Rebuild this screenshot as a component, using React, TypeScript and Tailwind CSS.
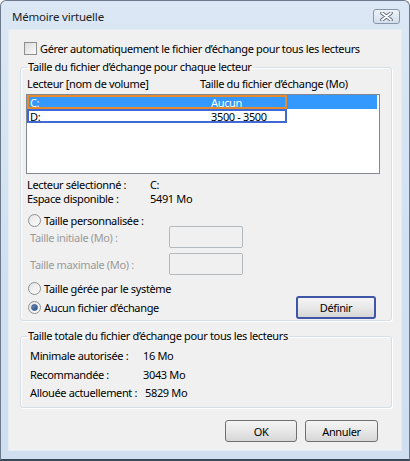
import React from "react";

const font = { fontFamily: '"Noto Sans", "Open Sans", sans-serif' };

function Radio({ checked = false }: { checked?: boolean }) {
  return (
    <span className="w-[13px] h-[13px] rounded-full border border-[#8e8f8f] bg-gradient-to-br from-[#e6e6e6] to-[#fbfbfb] flex items-center justify-center shrink-0">
      {checked && (
        <span className="w-[7px] h-[7px] rounded-full bg-gradient-to-br from-[#6f8fc2] to-[#2d4f80] border border-[#3b5b8c]" />
      )}
    </span>
  );
}

function Btn({ label, w, focused = false }: { label: string; w: string; focused?: boolean }) {
  return (
    <div
      className={
        "h-full rounded-[3px] flex items-center justify-center text-black bg-gradient-to-b from-[#f4f4f4] via-[#e8e8e8] to-[#d6d6d6] " +
        w +
        (focused ? " border-2 border-[#3f55a8]" : " border border-[#707070]")
      }
    >
      {label}
    </div>
  );
}

export default function App() {
  return (
    <div
      style={font}
      className="w-[410px] h-[461px] text-[11px] tracking-[-0.35px] leading-none whitespace-nowrap text-black bg-gradient-to-b from-[#dbe7f4] via-[#d2e1f1] to-[#cfdff0] border border-[#6c7a8b] border-b-2 border-b-[#3a4756] rounded-t-[6px] flex flex-col overflow-hidden"
    >
      {/* title bar */}
      <div className="h-[28px] flex items-start shrink-0">
        <div className="pl-[11px] pt-[10px] text-[#1e1e1e] text-[11.5px] tracking-[-0.2px]">Mémoire virtuelle</div>
        <div className="ml-auto mr-[9px] mt-[8px] w-[27px] h-[15px] rounded-[3px] border border-[#8797ab] bg-gradient-to-b from-[#eef3f9] to-[#d3deea] flex items-center justify-center">
          <svg width="13" height="9" viewBox="0 0 13 9">
            <path d="M2 1 L11 8 M11 1 L2 8" stroke="#59677a" strokeWidth="3.6" strokeLinecap="round" />
            <path d="M2 1 L11 8 M11 1 L2 8" stroke="#ffffff" strokeWidth="1.8" strokeLinecap="round" />
          </svg>
        </div>
      </div>

      {/* client area */}
      <div className="mx-[7px] w-[394px] h-[422px] bg-[#f0f0f0] border border-[#e3ebf4] flex flex-col">
        {/* checkbox row */}
        <div className="mt-[10px] h-[16px] flex items-center pl-[15px]">
          <span className="w-[13px] h-[13px] border border-[#8e8f8f] bg-gradient-to-br from-[#dcdcdc] to-[#fbfbfb]" />
          <span className="ml-[3px]">Gérer automatiquement le fichier d’échange pour tous les lecteurs</span>
        </div>

        {/* group 1 */}
        <fieldset className="mt-[3px] ml-[11px] w-[372px] border border-[#d5dfe5] rounded-[3px] shadow-[inset_1px_1px_0_#ffffff,1px_1px_0_#ffffff] p-0 pb-[1px]">
          <legend className="ml-[6px] px-[1px] h-[16px] leading-[16px]">Taille du fichier d’échange pour chaque lecteur</legend>
          <div className="h-[16px] flex items-center pl-[6px]">
            <span className="w-[173px]">Lecteur [nom de volume]</span>
            <span>Taille du fichier d’échange (Mo)</span>
          </div>
          <div className="mt-[3px] ml-[5px] w-[354px] h-[80px] border border-[#828790] bg-white flex flex-col">
            <div className="h-[14px] w-[350px] bg-[#3399ff] text-white relative flex items-center">
              <div className="absolute left-0 top-0 w-[260px] h-[14px] border-2 border-[#e68a2e]" />
              <span className="pl-[3px] w-[184px]">C:</span>
              <span>Aucun</span>
            </div>
            <div className="h-[14px] w-[260px] border-2 border-[#3f69d6] flex items-center">
              <span className="pl-[1px] w-[182px]">D:</span>
              <span>3500 - 3500</span>
            </div>
          </div>
          <div className="mt-[3px] h-[14px] flex items-center pl-[6px]">
            <span className="w-[123px]">Lecteur sélectionné :</span>
            <span>C:</span>
          </div>
          <div className="h-[14px] flex items-center pl-[6px]">
            <span className="w-[123px]">Espace disponible :</span>
            <span>5491 Mo</span>
          </div>
          <div className="mt-[9px] h-[12px] flex items-center pl-[7px]">
            <Radio />
            <span className="ml-[3px]">Taille personnalisée :</span>
          </div>
          <div className="h-[22px] flex items-center pl-[9px] text-[#9a9a9a]">
            <span className="w-[139px]">Taille initiale (Mo) :</span>
            <span className="w-[74px] h-[22px] border border-[#b4b9bd] rounded-[2px] bg-[#f0f0f0]" />
          </div>
          <div className="mt-[5px] h-[22px] flex items-center pl-[9px] text-[#9a9a9a]">
            <span className="w-[139px]">Taille maximale (Mo) :</span>
            <span className="w-[74px] h-[22px] border border-[#b4b9bd] rounded-[2px] bg-[#f0f0f0]" />
          </div>
          <div className="mt-[5px] h-[16px] flex items-center pl-[7px]">
            <Radio />
            <span className="ml-[3px]">Taille gérée par le système</span>
          </div>
          <div className="h-[23px] flex items-center pl-[7px] pr-[15px]">
            <Radio checked />
            <span className="ml-[3px]">Aucun fichier d’échange</span>
            <div className="ml-auto h-[23px]">
              <Btn label="Définir" w="w-[80px]" focused />
            </div>
          </div>
        </fieldset>

        {/* group 2 */}
        <fieldset className="mt-[7px] ml-[11px] w-[372px] border border-[#d5dfe5] rounded-[3px] shadow-[inset_1px_1px_0_#ffffff,1px_1px_0_#ffffff] p-0 pb-[6px]">
          <legend className="ml-[6px] px-[1px] h-[16px] leading-[16px]">Taille totale du fichier d’échange pour tous les lecteurs</legend>
          <div className="mt-[2px] h-[19px] flex items-center pl-[9px]">
            <span className="w-[113px]">Minimale autorisée :</span>
            <span>16 Mo</span>
          </div>
          <div className="h-[18px] flex items-center pl-[9px]">
            <span className="w-[113px]">Recommandée :</span>
            <span>3043 Mo</span>
          </div>
          <div className="h-[18px] flex items-center pl-[9px]">
            <span className="w-[115px]">Allouée actuellement :</span>
            <span>5829 Mo</span>
          </div>
        </fieldset>

        {/* buttons */}
        <div className="mt-[12px] h-[22px] flex justify-end gap-[8px] pr-[23px]">
          <Btn label="OK" w="w-[72px]" />
          <Btn label="Annuler" w="w-[73px]" />
        </div>
      </div>
    </div>
  );
}
